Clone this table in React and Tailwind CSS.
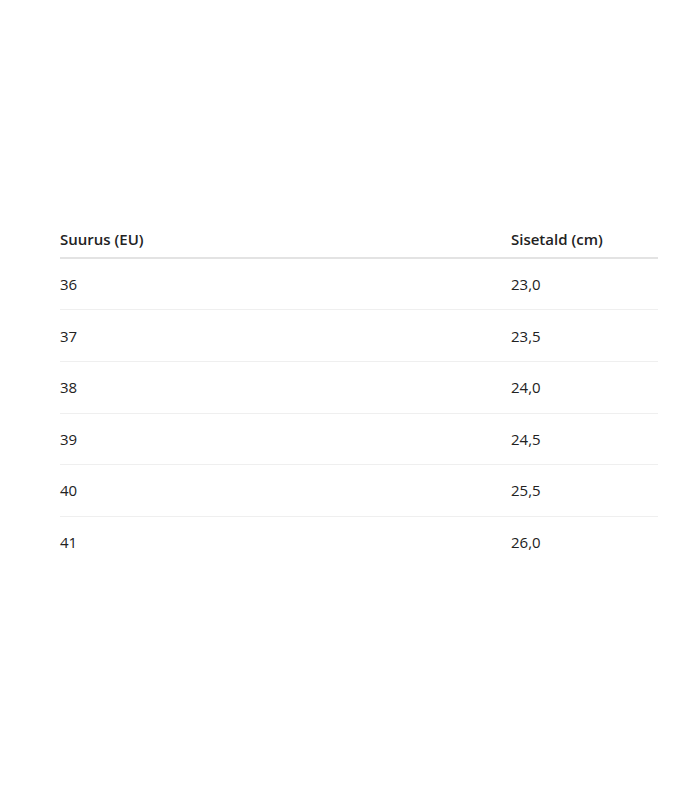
const rivid = [
  ["36", "23,0"],
  ["37", "23,5"],
  ["38", "24,0"],
  ["39", "24,5"],
  ["40", "25,5"],
  ["41", "26,0"],
];

export default function App() {
  return (
    <div className="h-[800px] bg-white flex flex-col justify-center pl-[60px] pr-[42px] pb-[10px] font-['Open_Sans',sans-serif] text-[#222] text-[15px] leading-[20px]">
      <div className="grid grid-cols-[451px_1fr] items-center h-[37px] border-b-2 border-[#e3e3e3] font-semibold">
        <div>Suurus (EU)</div>
        <div>Sisetald (cm)</div>
      </div>
      {rivid.map(([suurus, sisetald], i) => (
        <div
          key={suurus}
          className={`grid grid-cols-[451px_1fr] items-center h-[51.6px] ${i < rivid.length - 1 ? "border-b border-[#efefef]" : ""}`}
        >
          <div>{suurus}</div>
          <div>{sisetald}</div>
        </div>
      ))}
    </div>
  );
}
